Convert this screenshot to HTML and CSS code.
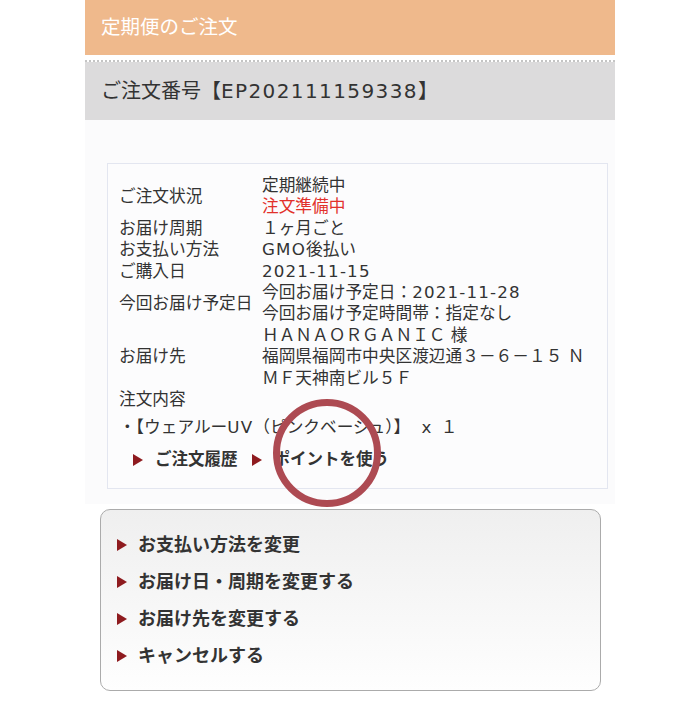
FILE: index.html
```html
<!DOCTYPE html>
<html lang="ja">

<head>
    <meta charset="utf-8">
    <title>定期便のご注文</title>
    <link rel="stylesheet" href="styles.css">
</head>

<body>
    <div class="page">
        <div class="title">定期便のご注文</div>
        <div class="order-no">ご注文番号【<span class="en">EP202111159338</span>】</div>

        <div class="detail">
            <div class="detail-box">
                <table class="info">
                    <tr>
                        <th>ご注文状況</th>
                        <td>定期継続中<br><span class="alert">注文準備中</span></td>
                    </tr>
                    <tr>
                        <th>お届け周期</th>
                        <td>１ヶ月ごと</td>
                    </tr>
                    <tr>
                        <th>お支払い方法</th>
                        <td><span class="en">GMO</span>後払い</td>
                    </tr>
                    <tr>
                        <th>ご購入日</th>
                        <td><span class="en">2021-11-15</span></td>
                    </tr>
                    <tr>
                        <th>今回お届け予定日</th>
                        <td>今回お届け予定日：<span class="en">2021-11-28</span><br>今回お届け予定時間帯：指定なし</td>
                    </tr>
                    <tr>
                        <th>お届け先</th>
                        <td>ＨＡＮＡＯＲＧＡＮＩＣ 様<br>福岡県福岡市中央区渡辺通３－６－１５ Ｎ<br>ＭＦ天神南ビル５Ｆ</td>
                    </tr>
                    <tr>
                        <th colspan="2">注文内容</th>
                    </tr>
                </table>
                <p class="item">・【ウェアルー<span class="en">UV</span>（ピンクベージュ）】 <span class="qty">x １</span></p>
                <div class="links">
                    <a class="arrow-link" href="#">ご注文履歴</a>
                    <a class="arrow-link" href="#">ポイントを使う</a>
                </div>
            </div>
        </div>

        <ul class="menu">
            <li><a class="arrow-link" href="#">お支払い方法を変更</a></li>
            <li><a class="arrow-link" href="#">お届け日・周期を変更する</a></li>
            <li><a class="arrow-link" href="#">お届け先を変更する</a></li>
            <li><a class="arrow-link" href="#">キャンセルする</a></li>
        </ul>

        <div class="mark"></div>
    </div>
</body>

</html>
```

FILE: styles.css
```css
:root {
    --orange: #efb98c;
    --gray-bar: #dcdbdc;
    --font-color: #333;
    --arrow: #8e1b1f;
}

body {
    font-family: "DejaVu Sans", "Noto Sans CJK JP", sans-serif;
    margin: 0;
    padding: 0;
    background-color: #fff;
    color: var(--font-color);
}

.en {
    letter-spacing: 0.07em;
}

.page {
    position: relative;
    width: 530px;
    margin: 0 auto;
}

.title {
    height: 55px;
    line-height: 55px;
    padding-left: 16px;
    background-color: var(--orange);
    color: #fff;
    font-size: 19.5px;
}

.order-no {
    margin-top: 5px;
    height: 58px;
    line-height: 58px;
    padding-left: 16px;
    border-top: 2px dotted #c4c4c4;
    background-color: var(--gray-bar);
    background-clip: padding-box;
    font-size: 20px;
}

.detail {
    padding: 43px 7px 15px 22px;
    background-color: #fbfbfc;
}

.detail-box {
    padding: 11px 8px 17px 11px;
    border: 1px solid #e3e6f0;
    background-color: #fcfcfd;
}

.info {
    border-collapse: collapse;
    font-size: 16.7px;
    line-height: 21.4px;
}

.info th,
.info td {
    padding: 0;
    text-align: left;
    vertical-align: middle;
    font-weight: normal;
    white-space: nowrap;
}

.info th {
    width: 143px;
}

.alert {
    color: #e2312b;
}

.item {
    margin: 6px 0 0;
    font-size: 16.7px;
    line-height: 22px;
}

.qty {
    margin-left: 6px;
    word-spacing: 4px;
}

.links {
    display: flex;
    gap: 14px;
    margin-top: 11px;
    padding-left: 14px;
}

.arrow-link {
    display: flex;
    align-items: center;
    gap: 12px;
    color: var(--font-color);
    text-decoration: none;
    font-size: 16.5px;
    font-weight: bold;
    line-height: 22px;
}

.arrow-link::before {
    content: "";
    border-left: 10px solid var(--arrow);
    border-top: 6.5px solid transparent;
    border-bottom: 6.5px solid transparent;
}

.menu {
    list-style: none;
    margin: 5px 14px 0 15px;
    padding: 16px 16px;
    border: 1px solid #ababab;
    border-radius: 10px;
    background: linear-gradient(to bottom, #efefef, #fefefe);
}

.menu li {
    height: 37px;
    display: flex;
    align-items: center;
}

.menu .arrow-link {
    gap: 11px;
    font-size: 18px;
}

.mark {
    position: absolute;
    left: 188px;
    top: 399px;
    width: 108px;
    height: 108px;
    box-sizing: border-box;
    border: 7px solid #ad4a52;
    border-radius: 50%;
}
```
